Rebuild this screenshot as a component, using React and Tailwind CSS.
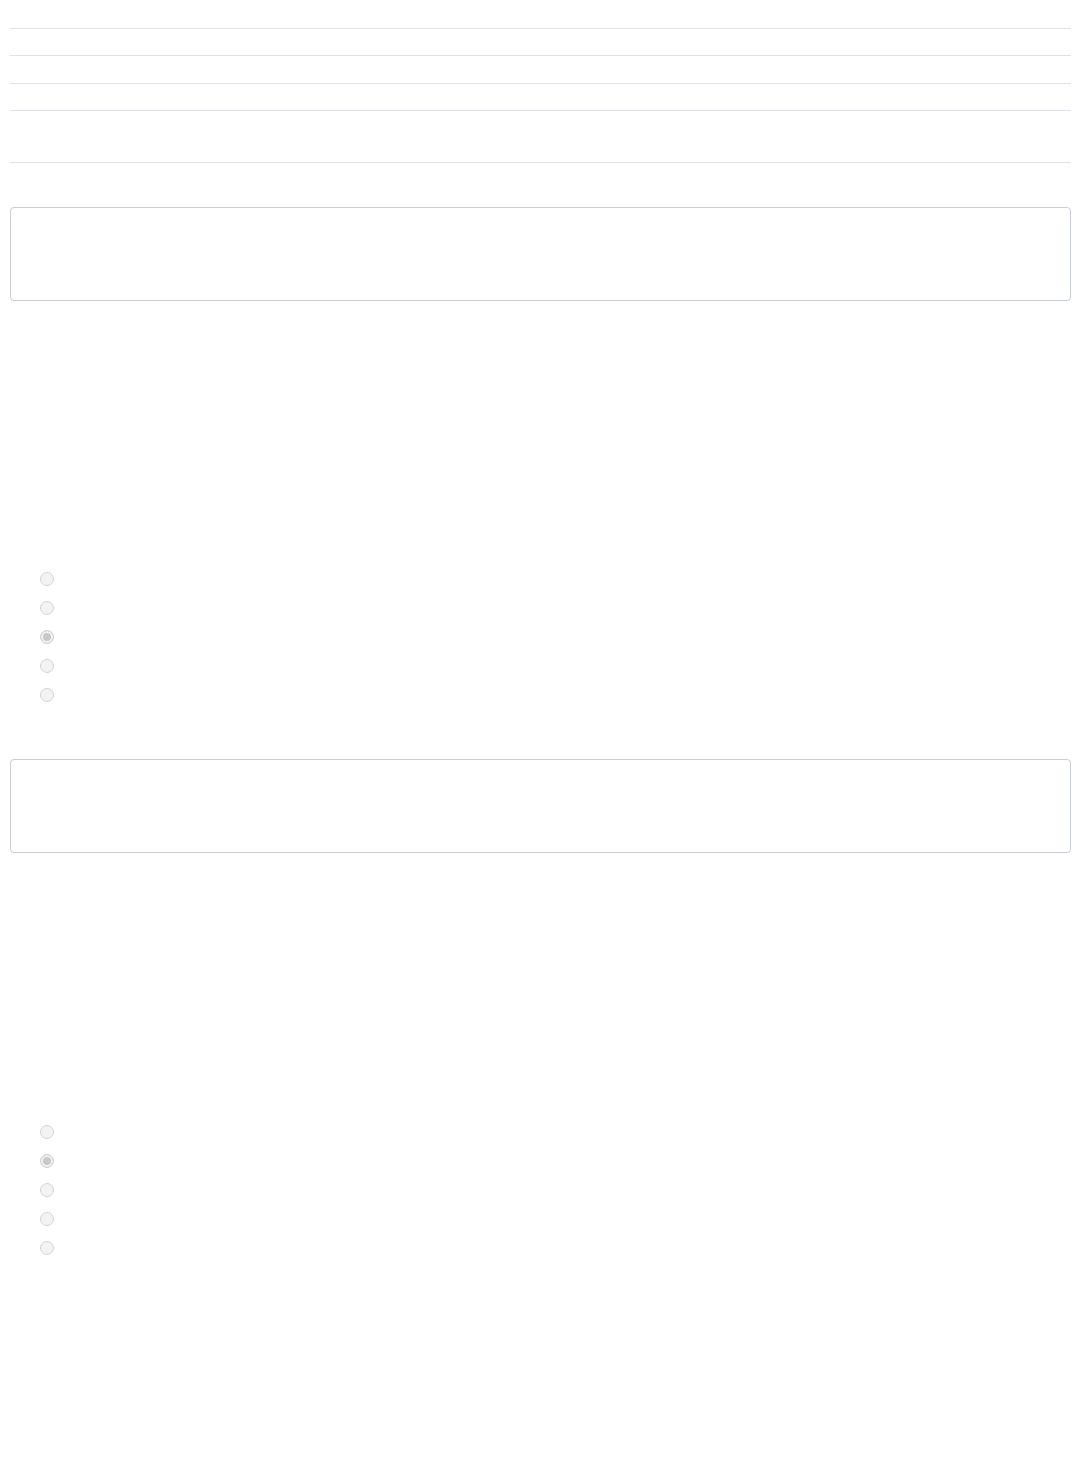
const rows = [29, 27, 28, 27, 52];

function RadioList({ checked, name }) {
  return (
    <div className="flex flex-col gap-[15px] pl-[30px]">
      {[0, 1, 2, 3, 4].map((i) => (
        <input
          key={i}
          type="radio"
          name={name}
          disabled
          defaultChecked={i === checked}
          className="m-0 block h-[14px] w-[14px] appearance-none rounded-full border border-[#d3d3d3] bg-[#f3f3f3] checked:bg-[#c8c8c8] checked:shadow-[inset_0_0_0_2px_#f3f3f3]"
        />
      ))}
    </div>
  );
}

function Box() {
  return <div className="h-[94px] rounded-sm border border-[#c9cdd6] bg-white" />;
}

export default function App() {
  return (
    <div className="min-h-[1480px] bg-white pl-2.5 pr-2 font-['Liberation_Sans',sans-serif]">
      <div>
        {rows.map((h, i) => (
          <div key={i} className="border-b border-[#dee2e6]" style={{ height: h }} />
        ))}
      </div>

      <div className="mt-[44px]">
        <Box />
      </div>
      <div className="mt-[271px]">
        <RadioList name="first" checked={2} />
      </div>

      <div className="mt-[57px]">
        <Box />
      </div>
      <div className="mt-[272px]">
        <RadioList name="second" checked={1} />
      </div>
    </div>
  );
}
